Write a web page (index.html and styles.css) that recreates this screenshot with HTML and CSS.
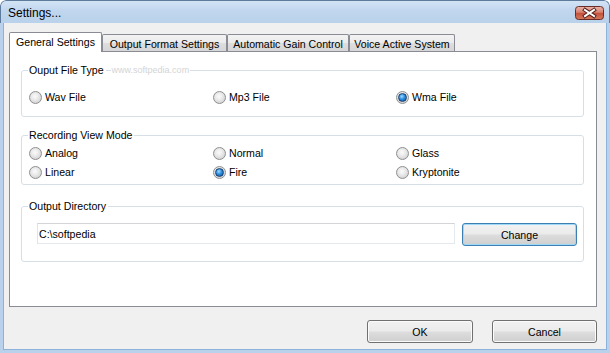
FILE: index.html
```html
<!DOCTYPE html>
<html>
<head>
<meta charset="utf-8">
<title>Settings...</title>
<link rel="stylesheet" href="styles.css">
</head>
<body>
<div class="window">
  <div class="titlebar">
    <span class="title">Settings...</span>
    <span class="close" aria-label="Close">
      <svg width="29" height="14" viewBox="0 0 29 14">
        <defs>
          <linearGradient id="cg" x1="0" y1="0" x2="0" y2="1">
            <stop offset="0" stop-color="#eab4aa"/>
            <stop offset="0.45" stop-color="#d8826f"/>
            <stop offset="0.5" stop-color="#c4503a"/>
            <stop offset="1" stop-color="#d47a5c"/>
          </linearGradient>
        </defs>
        <rect x="0.5" y="0.5" width="28" height="13" rx="3" fill="url(#cg)" stroke="#6a2c26"/>
        <path d="M10 4 L19 10 M19 4 L10 10" stroke="#5a2420" stroke-width="4" stroke-linecap="square"/>
        <path d="M10 4 L19 10 M19 4 L10 10" stroke="#ffffff" stroke-width="2" stroke-linecap="square"/>
      </svg>
    </span>
  </div>
  <div class="client">
    <div class="tabs">
      <div class="tab active">General Settings</div>
      <div class="tab t2">Output Format Settings</div>
      <div class="tab t3">Automatic Gain Control</div>
      <div class="tab t4">Voice Active System</div>
    </div>
    <div class="panel">
      <div class="group g1">
        <div class="legend-row"><span class="legend">Ouput File Type</span><span class="wm">www.softpedia.com</span></div>
        <div class="opts">
          <label class="opt"><span class="radio"></span>Wav File</label>
          <label class="opt"><span class="radio"></span>Mp3 File</label>
          <label class="opt"><span class="radio on"></span>Wma File</label>
        </div>
      </div>
      <div class="group g2">
        <div class="legend-row"><span class="legend">Recording View Mode</span></div>
        <div class="opts">
          <label class="opt"><span class="radio"></span>Analog</label>
          <label class="opt"><span class="radio"></span>Normal</label>
          <label class="opt"><span class="radio"></span>Glass</label>
          <label class="opt"><span class="radio"></span>Linear</label>
          <label class="opt"><span class="radio on"></span>Fire</label>
          <label class="opt"><span class="radio"></span>Kryptonite</label>
        </div>
      </div>
      <div class="group g3">
        <div class="legend-row"><span class="legend">Output Directory</span></div>
        <div class="dir-row">
          <div class="input">C:\softpedia</div>
          <div class="btn focus change">Change</div>
        </div>
      </div>
    </div>
    <div class="footer">
      <div class="btn ok">OK</div>
      <div class="btn cancel">Cancel</div>
    </div>
  </div>
</div>
</body>
</html>
```
FILE: styles.css
```css
* { box-sizing: border-box; }
html, body { margin: 0; padding: 0; }
body {
  width: 610px;
  height: 353px;
  overflow: hidden;
  background: #ffffff;
  font-family: "Liberation Sans", Arial, sans-serif;
  font-size: 10.6px;
  color: #000;
}
.window {
  width: 610px;
  height: 353px;
  display: flex;
  flex-direction: column;
  border-radius: 6px 6px 0 0;
  overflow: hidden;
}
.titlebar {
  height: 23px;
  flex: none;
  display: flex;
  align-items: center;
  justify-content: space-between;
  padding: 0 5px 0 7px;
  background: linear-gradient(#d3e3f5, #c0d6ee 45%, #b9d1ea);
  border: 1px solid #5e7b9e;
  border-bottom: 0;
  border-radius: 6px 6px 0 0;
}
.title {
  font-size: 12px;
  color: #000;
  padding-top: 1px;
}
.close {
  display: flex;
  margin-top: 1px;
}
.client {
  flex: 1;
  display: flex;
  flex-direction: column;
  background: #f0f0f0;
  border: 3px solid #b9d1ea;
  border-top: 0;
  box-shadow: inset 1px 0 #8db2d9, inset -1px 0 #8db2d9, inset 0 -1px #8db2d9;
  padding: 9px 10px 0 6px;
}
.tabs {
  display: flex;
  align-items: flex-end;
  height: 19px;
  flex: none;
}
.tab {
  height: 17px;
  display: flex;
  align-items: center;
  justify-content: center;
  border: 1px solid #898c95;
  border-bottom: 0;
  border-radius: 2px 2px 0 0;
  background: linear-gradient(#f3f3f3, #ebebeb 50%, #dedede 51%, #d6d6d6);
  white-space: nowrap;
  padding-top: 1px;
}
.tab.active {
  width: 93px;
  height: 20px;
  margin-bottom: -1px;
  background: #fff;
  position: relative;
  z-index: 1;
  padding-top: 0;
  padding-bottom: 1px;
}
.t2 { width: 125px; }
.t3 { width: 122px; }
.t4 { width: 106px; }
.panel {
  height: 256px;
  flex: none;
  background: #fff;
  border: 1px solid #898c95;
  padding: 18px 12px 0 11px;
  display: flex;
  flex-direction: column;
}
.group {
  border: 1px solid #d5dfe5;
  border-radius: 3px;
}
.g2 { margin-top: 18px; }
.g3 { margin-top: 21px; }
.legend-row {
  display: flex;
  align-items: center;
  height: 13px;
  margin: -7px 0 0 6px;
}
.legend {
  background: #fff;
  padding: 0 2px 0 1px;
  line-height: 13px;
}
.wm {
  margin-left: 5px;
  background: #fff;
  color: #d4d4d4;
  font-size: 9px;
  padding: 0 1px;
  line-height: 13px;
}
.opts {
  display: grid;
  grid-template-columns: 184px 183px auto;
  row-gap: 6px;
}
.g1 .opts { padding: 14px 0 12px 7px; }
.g2 .opts { padding: 5px 0 5px 7px; }
.opt {
  display: flex;
  align-items: center;
  gap: 3px;
  height: 13px;
  line-height: 13px;
}
.radio {
  width: 13px;
  height: 13px;
  flex: none;
  border-radius: 50%;
  border: 1px solid #8e8f8f;
  background: radial-gradient(circle at 45% 40%, #fbfbfb 0, #ececec 35%, #d2d2d2 80%, #c4c4c4 100%);
  display: flex;
  align-items: center;
  justify-content: center;
}
.radio.on::after {
  content: "";
  width: 7px;
  height: 7px;
  border-radius: 50%;
  border: 1px solid #173f6d;
  background: radial-gradient(circle at 40% 35%, #9fdcff 0, #2d8de0 45%, #0d4f9a 100%);
}
.dir-row {
  display: flex;
  align-items: flex-start;
  gap: 7px;
  padding: 10px 0 15px 15px;
}
.input {
  width: 418px;
  height: 21px;
  border: 1px solid #e3e9ef;
  border-top-color: #d2d4d8;
  border-left-color: #e2e3ea;
  background: #fff;
  padding-left: 1px;
  display: flex;
  align-items: center;
}
.btn {
  height: 23px;
  display: flex;
  align-items: center;
  justify-content: center;
  border: 1px solid #707070;
  border-radius: 3px;
  background: linear-gradient(#f2f2f2, #ebebeb 48%, #dddddd 52%, #cfcfcf);
  box-shadow: inset 0 0 0 1px #fbfbfb;
}
.btn.focus {
  border-color: #3c7fb1;
  box-shadow: inset 0 0 0 1px #9ed9f8;
}
.change { width: 115px; }
.footer {
  display: flex;
  justify-content: flex-end;
  gap: 19px;
  margin-top: 13px;
}
.ok { width: 106px; }
.cancel { width: 105px; }
```
